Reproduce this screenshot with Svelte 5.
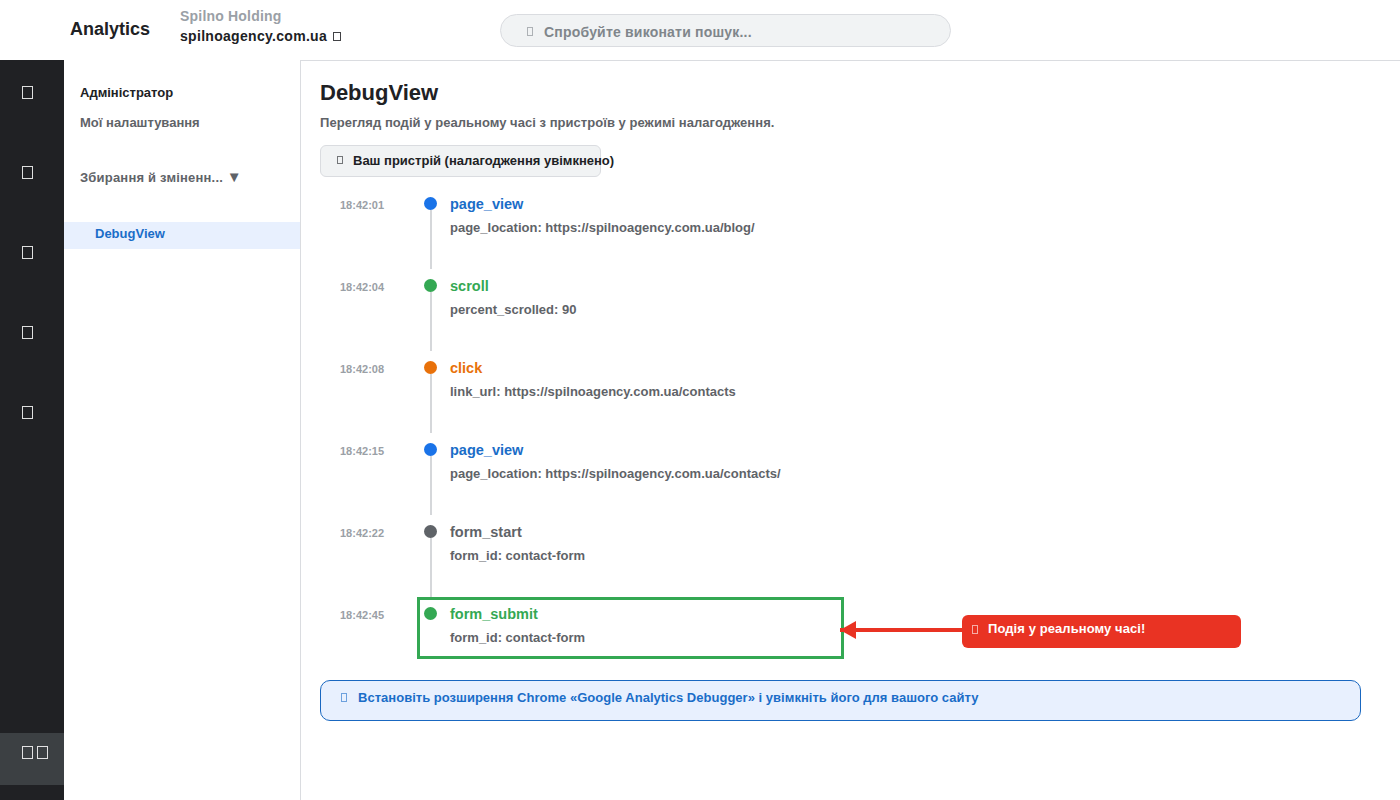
<script>
  const railCount = [0, 1, 2, 3, 4];

  const events = [
    { time: '18:42:01', name: 'page_view', detail: 'page_location: https://spilnoagency.com.ua/blog/', color: '#1a73e8', nameColor: '#1a6dc8' },
    { time: '18:42:04', name: 'scroll', detail: 'percent_scrolled: 90', color: '#34a853', nameColor: '#34a853' },
    { time: '18:42:08', name: 'click', detail: 'link_url: https://spilnoagency.com.ua/contacts', color: '#e8710a', nameColor: '#e8710a' },
    { time: '18:42:15', name: 'page_view', detail: 'page_location: https://spilnoagency.com.ua/contacts/', color: '#1a73e8', nameColor: '#1a6dc8' },
    { time: '18:42:22', name: 'form_start', detail: 'form_id: contact-form', color: '#5f6368', nameColor: '#5f6368' },
    { time: '18:42:45', name: 'form_submit', detail: 'form_id: contact-form', color: '#34a853', nameColor: '#34a853' }
  ];
</script>

<div class="page">
  <header class="topbar">
    <div class="brand">Analytics</div>
    <div class="account">
      <div class="holding">Spilno Holding</div>
      <div class="site">spilnoagency.com.ua <span class="box box-site"></span></div>
    </div>
    <div class="search"><span class="box box-small"></span>Спробуйте виконати пошук...</div>
  </header>

  <div class="body">
    <aside class="rail">
      <div class="rail-top">
        {#each railCount as n (n)}
          <div class="rail-icon"><span class="box box-rail"></span></div>
        {/each}
      </div>
      <div class="rail-active">
        <span class="box box-rail"></span>
        <span class="box box-rail"></span>
      </div>
    </aside>

    <nav class="side">
      <div class="side-title">Адміністратор</div>
      <div class="side-item">Мої налаштування</div>
      <div class="side-group">Збирання й зміненн... <span class="tri">▼</span></div>
      <div class="side-link">DebugView</div>
    </nav>

    <main class="main">
      <h1>DebugView</h1>
      <p class="sub">Перегляд подій у реальному часі з пристроїв у режимі налагодження.</p>
      <div class="device"><span class="box box-small"></span>Ваш пристрій (налагодження увімкнено)</div>

      <div class="timeline">
        {#each events as ev, i}
          <div class="row">
            <div class="time">{ev.time}</div>
            <div class="marker">
              <span class="dot" style="background:{ev.color}"></span>
              {#if i < events.length - 1}
                <span class="line"></span>
              {/if}
            </div>
            <div class="info">
              <div class="name" style="color:{ev.nameColor}">{ev.name}</div>
              <div class="detail">{ev.detail}</div>
            </div>
            {#if i === events.length - 1}
              <div class="highlight"></div>
              <div class="callout-arrow"></div>
              <div class="callout"><span class="box box-small"></span>Подія у реальному часі!</div>
            {/if}
          </div>
        {/each}
      </div>

      <div class="tip"><span class="box box-small"></span>Встановіть розширення Chrome «Google Analytics Debugger» і увімкніть його для вашого сайту</div>
    </main>
  </div>
</div>

<style>
  :global(body) {
    margin: 0;
    background: #fff;
  }

  .page {
    width: 1400px;
    height: 800px;
    overflow: hidden;
    font-family: "Liberation Sans", Arial, sans-serif;
    color: #202124;
  }

  /* missing-glyph boxes */
  .box {
    display: inline-block;
    box-sizing: border-box;
    border: 1px solid currentColor;
    flex-shrink: 0;
  }

  .box-rail {
    width: 11px;
    height: 13px;
    opacity: 0.85;
  }

  .box-site {
    width: 8px;
    height: 9px;
    margin-left: 2px;
    opacity: 0.85;
  }

  .box-small {
    width: 6px;
    height: 9px;
    margin-right: 11px;
    opacity: 0.6;
  }

  .topbar {
    height: 60px;
    display: flex;
    align-items: center;
    padding-left: 70px;
    box-sizing: border-box;
  }

  .brand {
    width: 110px;
    font-size: 18px;
    font-weight: 700;
    margin-top: -2px;
  }

  .account {
    width: 320px;
    font-size: 14px;
    font-weight: 700;
    margin-top: -7px;
  }

  .holding {
    font-size: 14px;
    line-height: 15px;
    color: #9aa0a6;
    letter-spacing: 0.2px;
    margin-bottom: 4px;
  }

  .site {
    letter-spacing: 0.3px;
  }

  .search {
    width: 451px;
    height: 33px;
    box-sizing: border-box;
    background: #f1f3f4;
    border: 1px solid #dadce0;
    border-radius: 17px;
    display: flex;
    align-items: center;
    padding: 3px 0 0 26px;
    font-size: 14px;
    font-weight: 700;
    letter-spacing: 0.2px;
    color: #80868b;
  }

  .body {
    display: flex;
    height: 740px;
  }

  .rail {
    width: 64px;
    flex-shrink: 0;
    background: #202124;
    color: #fff;
    display: flex;
    flex-direction: column;
    justify-content: space-between;
    padding-bottom: 15px;
    box-sizing: border-box;
  }

  .rail-top {
    padding-top: 25px;
  }

  .rail-icon {
    height: 80px;
    padding-left: 22px;
  }

  .rail-active {
    height: 52px;
    box-sizing: border-box;
    background: #3c4043;
    display: flex;
    gap: 4px;
    padding: 13px 0 0 22px;
  }

  .side {
    width: 237px;
    flex-shrink: 0;
    box-sizing: border-box;
    border-right: 1px solid #dadce0;
    padding-top: 25px;
    font-size: 13px;
    font-weight: 700;
    color: #5f6368;
  }

  .side-title {
    padding-left: 16px;
    height: 30px;
    line-height: 16px;
    color: #202124;
  }

  .side-item {
    padding-left: 16px;
    line-height: 16px;
    height: 54px;
  }

  .side-group {
    padding-left: 16px;
    line-height: 16px;
    height: 53px;
    letter-spacing: 0.2px;
  }

  .tri {
    font-size: 15px;
  }

  .side-link {
    height: 27px;
    line-height: 23px;
    padding-left: 31px;
    background: #e8f0fe;
    color: #1a6dc8;
  }

  .main {
    flex: 1;
    padding: 20px 39px 0 19px;
    border-top: 1px solid #dadce0;
    box-sizing: border-box;
    min-width: 0;
  }

  h1 {
    margin: 0;
    font-size: 22px;
    line-height: 24px;
    font-weight: 700;
  }

  .sub {
    margin: 10px 0 0;
    font-size: 13px;
    line-height: 16px;
    font-weight: 700;
    letter-spacing: 0.04px;
    color: #5f6368;
  }

  .device {
    margin-top: 14px;
    width: 281px;
    height: 32px;
    box-sizing: border-box;
    background: #f1f3f4;
    border: 1px solid #dadce0;
    border-radius: 6px;
    display: flex;
    align-items: center;
    padding: 0 0 2px 16px;
    font-size: 13px;
    font-weight: 700;
    white-space: nowrap;
  }

  .device .box-small {
    height: 8px;
    margin-right: 10px;
  }

  .timeline {
    margin-top: 18px;
  }

  .row {
    position: relative;
    height: 82px;
    display: flex;
  }

  .time {
    width: 97px;
    box-sizing: border-box;
    padding-left: 20px;
    font-size: 11px;
    font-weight: 700;
    color: #9aa0a6;
    line-height: 20px;
  }

  .marker {
    width: 27px;
    display: flex;
    flex-direction: column;
    align-items: center;
    padding-top: 2px;
  }

  .dot {
    width: 13px;
    height: 13px;
    border-radius: 50%;
    flex-shrink: 0;
  }

  .line {
    width: 2px;
    height: 59px;
    background: #d5d7da;
    margin-left: 1px;
  }

  .info {
    padding-left: 6px;
  }

  .name {
    font-size: 14.5px;
    font-weight: 700;
    line-height: 18px;
  }

  .detail {
    margin-top: 7px;
    font-size: 13px;
    font-weight: 700;
    color: #5f6368;
    line-height: 16px;
  }

  .highlight {
    position: absolute;
    left: 97px;
    top: -8px;
    width: 427px;
    height: 62px;
    box-sizing: border-box;
    border: 3px solid #34a853;
  }

  .callout-arrow {
    position: absolute;
    left: 520px;
    top: 23px;
    width: 122px;
    height: 4px;
    background: #e93323;
  }

  .callout-arrow::before {
    content: "";
    position: absolute;
    left: 0;
    top: -7px;
    border-top: 9px solid transparent;
    border-bottom: 9px solid transparent;
    border-right: 16px solid #e93323;
  }

  .callout {
    position: absolute;
    left: 642px;
    top: 10px;
    width: 279px;
    height: 33px;
    box-sizing: border-box;
    background: #e93323;
    color: #fff;
    border-radius: 6px;
    display: flex;
    align-items: flex-start;
    padding: 6px 0 0 10px;
    font-size: 13px;
    font-weight: 700;
    letter-spacing: 0.08px;
    line-height: 16px;
  }

  .callout .box-small {
    margin: 4px 10px 0 0;
  }

  .tip {
    margin-top: -7px;
    height: 41px;
    box-sizing: border-box;
    background: #e8f0fe;
    border: 1px solid #1967c0;
    border-radius: 10px;
    display: flex;
    align-items: flex-start;
    padding: 9px 0 0 20px;
    font-size: 13px;
    font-weight: 700;
    letter-spacing: 0.02px;
    line-height: 16px;
    color: #1a6dc8;
  }

  .tip .box-small {
    margin-top: 3px;
  }
</style>
